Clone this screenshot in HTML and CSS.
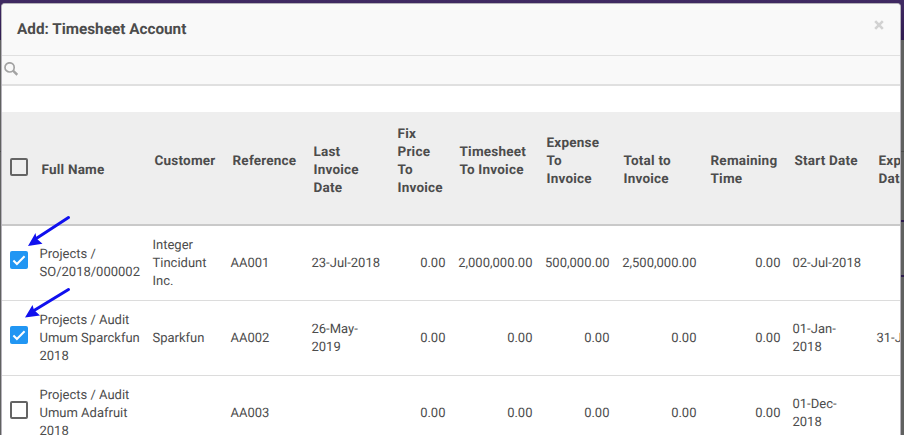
FILE: index.html
```
<!DOCTYPE html>
<html lang="en">
<head>
<meta charset="utf-8">
<title>Add: Timesheet Account</title>
<link rel="stylesheet" href="styles.css">
</head>
<body>
<div class="backdrop"><div class="navbar"></div><div class="rule rule-soft"></div><div class="rule rule-one"></div><div class="rule rule-two"></div></div>
<main class="modal">
  <header class="modal-header">
    <h1>Add: Timesheet Account</h1>
    <svg class="close" width="10" height="10" viewBox="0 0 10 10"><path d="M1.200 1.200l7.600 7.600M8.800 1.200l-7.600 7.600"/></svg>
  </header>
  <div class="search">
    <svg width="14" height="14" viewBox="0 0 14 14"><circle cx="5.600" cy="5.400" r="4.600"/><path class="handle" d="M9 8.700l4.300 4.100"/></svg>
  </div>
  <div class="table">
    <div class="row head">
      <div class="check"><span class="box"></span></div>
      <div>Full Name</div>
      <div class="lift">Customer</div>
      <div class="lift">Reference</div>
      <div>Last<br>Invoice<br>Date</div>
      <div class="lift">Fix<br>Price<br>To<br>Invoice</div>
      <div class="lift">Timesheet<br>To Invoice</div>
      <div class="lift">Expense<br>To<br>Invoice</div>
      <div>Total to<br>Invoice</div>
      <div>Remaining<br>Time</div>
      <div class="lift">Start Date</div>
      <div>Expiration<br>Date</div>
    </div>
    <div class="row">
      <div class="check"><span class="box checked"><svg width="18" height="18" viewBox="0 0 18 18"><path d="M3.400 9.500l3.500 3.500 7.700-7.700"/></svg></span></div>
      <div>Projects /<br>SO/2018/000002</div>
      <div>Integer<br>Tincidunt<br>Inc.</div>
      <div>AA001</div>
      <div>23-Jul-2018</div>
      <div class="num">0.00</div>
      <div class="num">2,000,000.00</div>
      <div class="num">500,000.00</div>
      <div class="num">2,500,000.00</div>
      <div class="num">0.00</div>
      <div>02-Jul-2018</div>
      <div></div>
    </div>
    <div class="row">
      <div class="check"><span class="box checked"><svg width="18" height="18" viewBox="0 0 18 18"><path d="M3.400 9.500l3.500 3.500 7.700-7.700"/></svg></span></div>
      <div>Projects / Audit<br>Umum Sparckfun<br>2018</div>
      <div>Sparkfun</div>
      <div>AA002</div>
      <div>26-May-<br>2019</div>
      <div class="num">0.00</div>
      <div class="num">0.00</div>
      <div class="num">0.00</div>
      <div class="num">0.00</div>
      <div class="num">0.00</div>
      <div>01-Jan-<br>2018</div>
      <div>31-Jan</div>
    </div>
    <div class="row">
      <div class="check"><span class="box"></span></div>
      <div>Projects / Audit<br>Umum Adafruit<br>2018</div>
      <div></div>
      <div>AA003</div>
      <div></div>
      <div class="num">0.00</div>
      <div class="num">0.00</div>
      <div class="num">0.00</div>
      <div class="num">0.00</div>
      <div class="num">0.00</div>
      <div>01-Dec-<br>2018</div>
      <div></div>
    </div>
  </div>
</main>
<svg class="arrows" width="90" height="120" viewBox="0 0 90 120">
  <g><path class="shaft" d="M68.500 12.500L37 33"/><path class="tip" d="M28 41l7.500-13 1 5.400 6 5.400z"/></g>
  <g><path class="shaft" d="M68.500 84.500L34 105.500"/><path class="tip" d="M25 112.500l7.500-12.500 1.500 5 6 5.500z"/></g>
</svg>
</body>
</html>
```

FILE: styles.css
```
* { box-sizing: border-box; }
body {
  margin: 0;
  height: 435px;
  overflow: hidden;
  position: relative;
  background: #606160;
  color: #4c4c4c;
  font: 13px/18px Roboto, sans-serif;
  text-rendering: geometricPrecision;
}
.backdrop { position: absolute; inset: 0; }
.navbar { height: 40px; background: linear-gradient(#402a63, #2f1c50); }
.rule { position: absolute; left: 0; right: 0; height: 2px; background: #2c1b4c; }
.rule-soft { top: 151px; height: 1px; background: #4b4b4b; }
.rule-one { top: 220px; left: 901px; }
.rule-two { top: 275px; left: 901px; }
.modal {
  position: relative;
  width: 900px;
  height: 432px;
  margin: 3px 0 0 1px;
  border: 1px solid #b5b2ba;
  border-bottom: 0;
  border-radius: 4px 4px 0 0;
  background: #fff;
  overflow: hidden;
}
.modal-header {
  height: 52px;
  padding: 0 17px 0 15px;
  display: flex;
  justify-content: space-between;
  align-items: center;
  background: #f9f9f9;
  border-bottom: 1px solid #e0e0e0;
}
h1 { margin: 0 0 1px; font-size: 15.300px; font-weight: 700; line-height: 20px; }
.close { margin-bottom: 9px; margin-right: -1px; fill: none; stroke: #d2d2d2; stroke-width: 2.600; }
.search {
  height: 30px;
  padding: 6px 2px;
  background: #f9f9f9;
  border-bottom: 2px solid #e0e0e0;
}
.search svg { display: block; fill: none; stroke: #a3a3a3; stroke-width: 1.700; }
.search .handle { stroke-width: 2.400; }
.table { margin-top: 26px; width: 970px; }
.row {
  display: grid;
  grid-template-columns: 32px 113px 78px 81px 84px 62px 87px 77px 87px 84px 84px 100px;
  align-items: center;
  height: 75px;
  border-bottom: 1px solid #dcdcdc;
}
.row > div { padding: 2px 6.500px 0 5.500px; white-space: nowrap; }
.row > .num { text-align: right; }
.row > .check { padding: 0 0 6px 8px; }
.head { height: 114px; background: #eee; border-bottom: 2px solid #c9c9c9; font-weight: 700; font-size: 13.500px; letter-spacing: 0.220px; }
.head > div { padding: 3px 0 0 7.500px; }
.head > .lift { padding: 0 0 15px 7.500px; }
.row.head > .check { padding: 0 0 2px 8px; }
.box { display: block; width: 18px; height: 18px; border: 2px solid #646464; border-radius: 2px; }
.box.checked { border: 0; background: #2196f3; }
.box svg { display: block; fill: none; stroke: #fff; stroke-width: 2; }
.arrows { position: absolute; left: 0; top: 205px; }
.shaft { stroke: #1010ee; stroke-width: 3; stroke-linecap: round; }
.tip { fill: #1010ee; }
```
